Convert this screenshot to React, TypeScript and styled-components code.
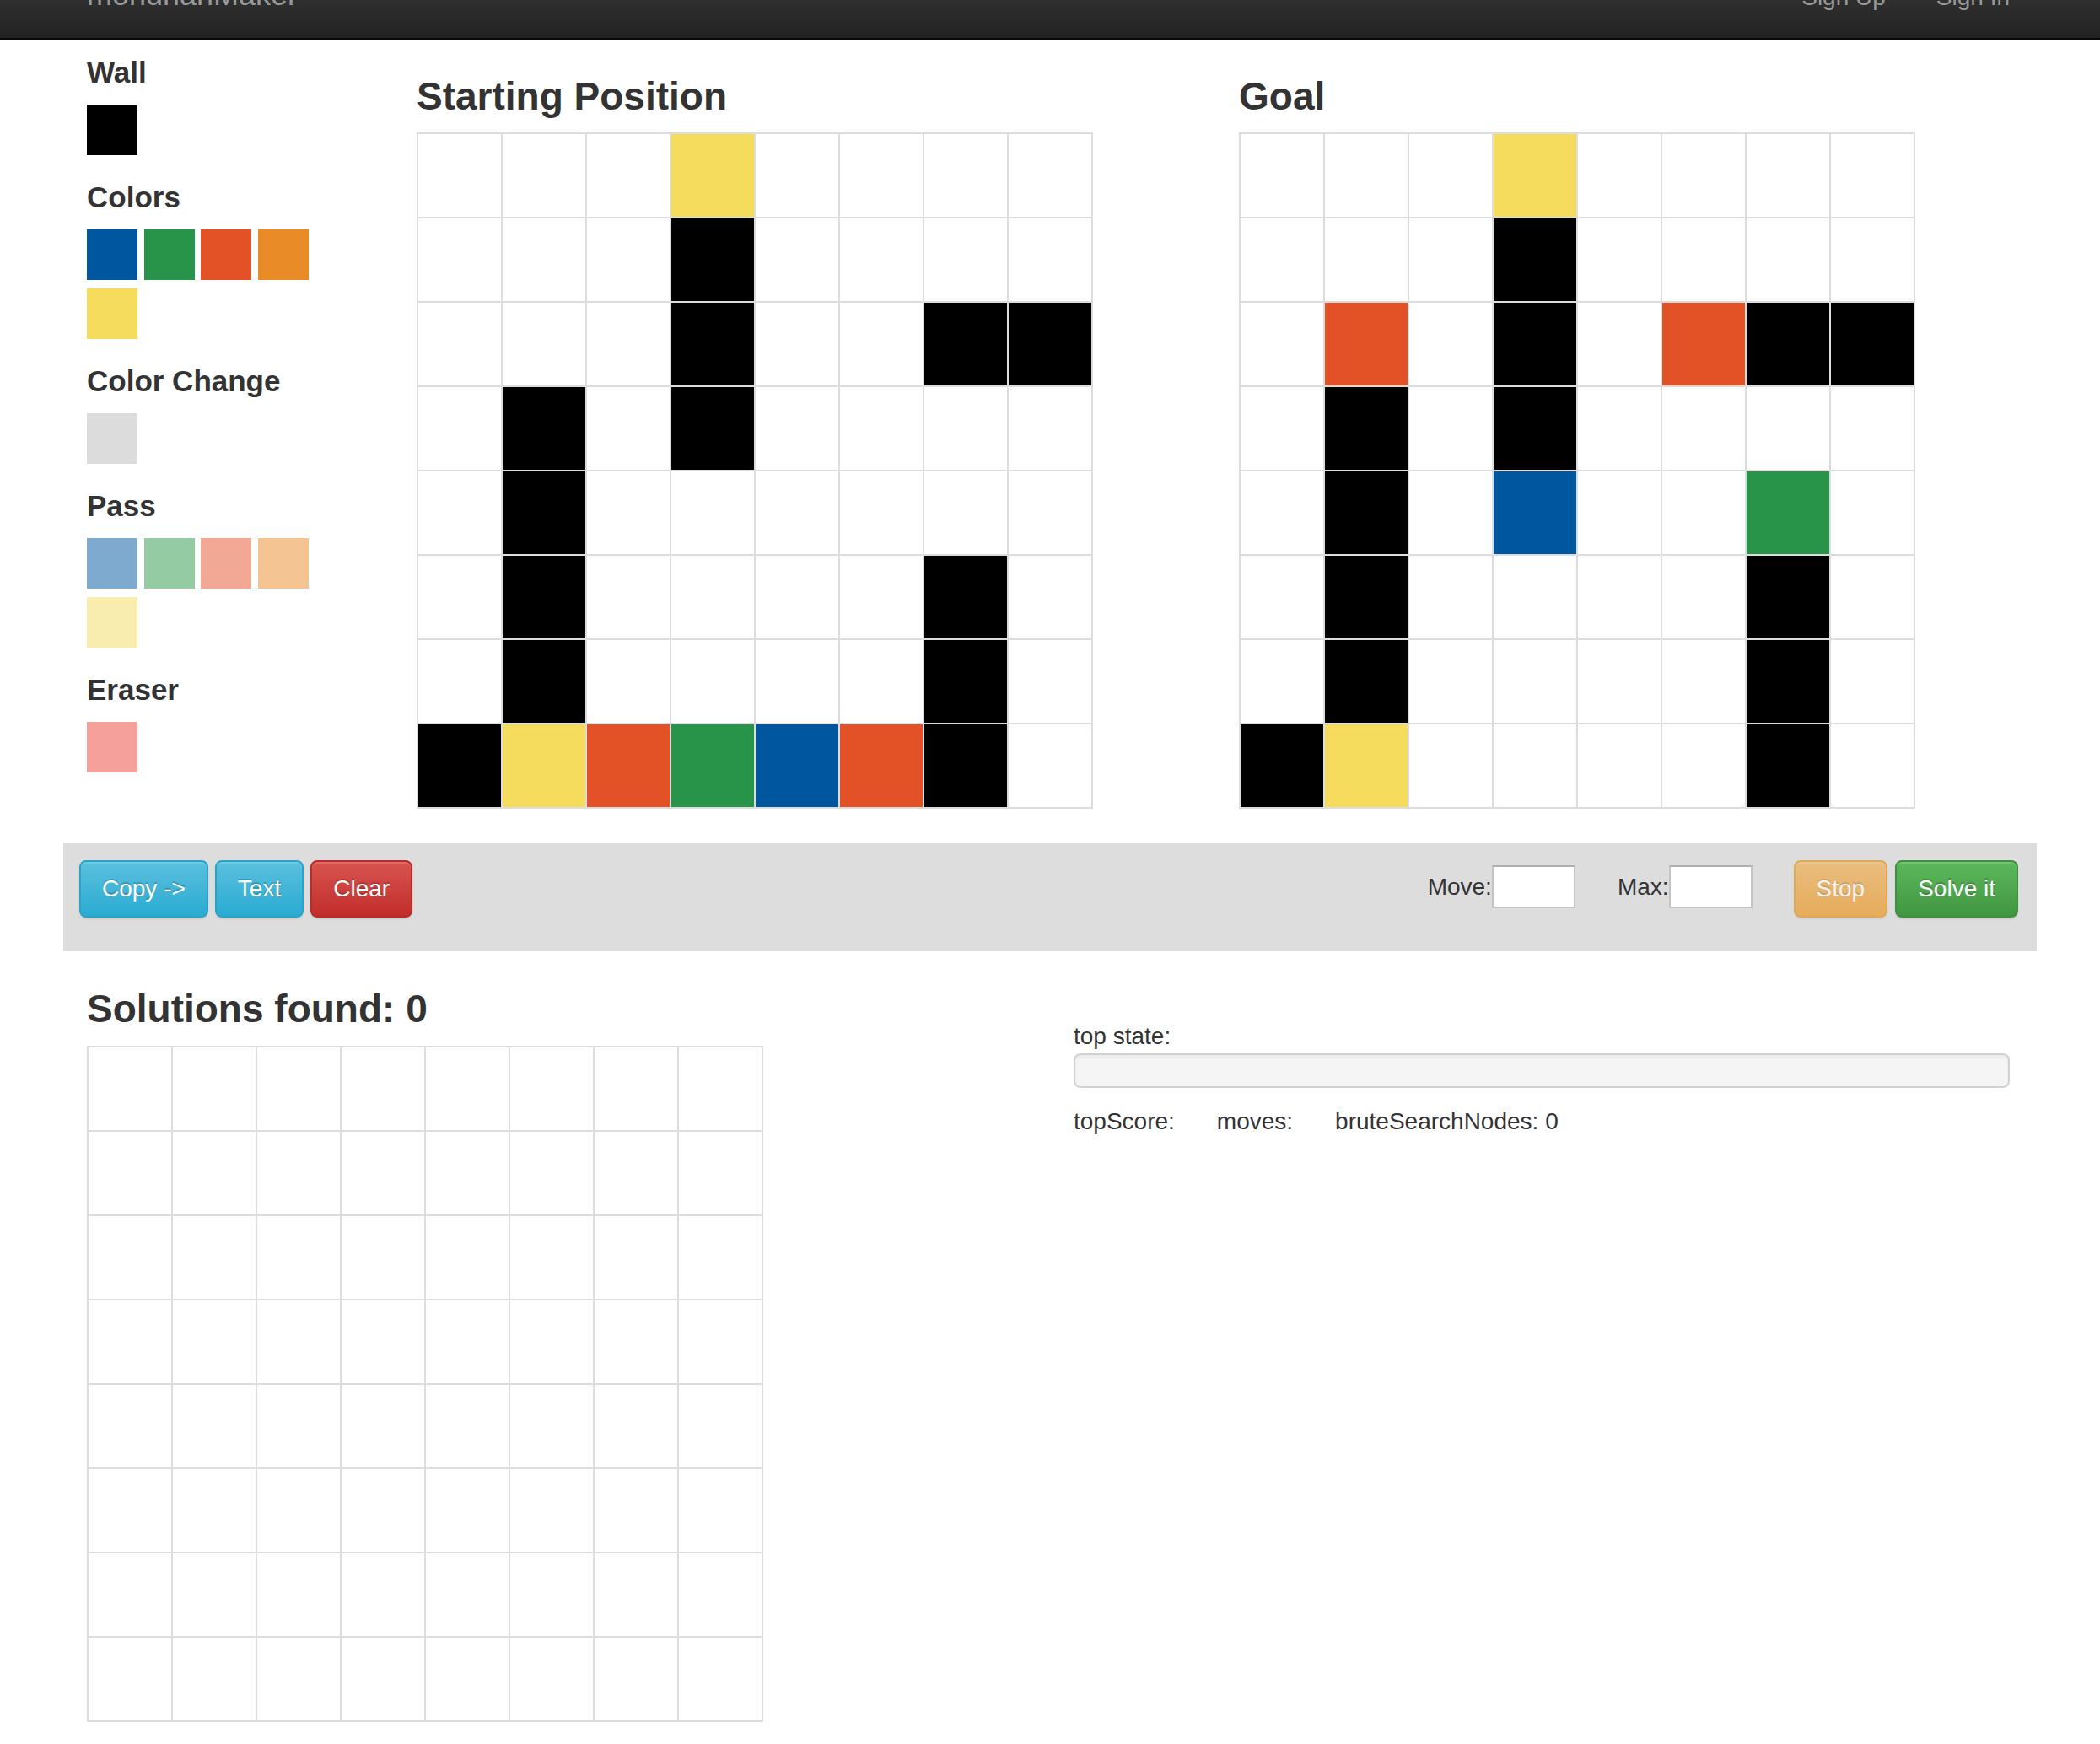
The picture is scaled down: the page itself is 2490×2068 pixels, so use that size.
import React from 'react';
import styled, { createGlobalStyle } from 'styled-components';

const GlobalStyle = createGlobalStyle`
  html, body {
    margin: 0;
    padding: 0;
    background: #fff;
  }
  body {
    font-family: "Liberation Sans", Arial, Helvetica, sans-serif;
    font-size: 28px;
    line-height: 40px;
    color: #333;
  }
  * {
    box-sizing: border-box;
  }
`;

const COLORS: Record<string, string> = {
  _: '#fff',
  K: '#000',
  Y: '#f6dc5c',
  R: '#e35226',
  G: '#28944a',
  B: '#00569f',
  O: '#e98b26',
};

const START = [
  '___Y____',
  '___K____',
  '___K__KK',
  '_K_K____',
  '_K______',
  '_K____K_',
  '_K____K_',
  'KYRGBRK_',
];

const GOAL = [
  '___Y____',
  '___K____',
  '_R_K_RKK',
  '_K_K____',
  '_K_B__G_',
  '_K____K_',
  '_K____K_',
  'KY____K_',
];

const EMPTY = Array.from({ length: 8 }, () => '________');

const PALETTE = [
  { title: 'Wall', swatches: ['#000'] },
  { title: 'Colors', swatches: ['#00569f', '#28944a', '#e35226', '#e98b26', '#f6dc5c'] },
  { title: 'Color Change', swatches: ['#dcdcdc'] },
  { title: 'Pass', swatches: ['#7eaad0', '#95cba3', '#f1a895', '#f4c493', '#f9ecaf'] },
  { title: 'Eraser', swatches: ['#f5a09b'] },
];

const Navbar = styled.div`
  height: 47px;
  overflow: hidden;
  background: linear-gradient(to bottom, #2f2f2f 0%, #222 100%);
  border-bottom: 2px solid #080808;
`;

const NavContainer = styled.div`
  width: 2340px;
  margin: -26px auto 0;
  padding: 0 32px 0 28px;
  display: flex;
  justify-content: space-between;
  align-items: baseline;
`;

const Brand = styled.span`
  font-size: 36px;
  line-height: 40px;
  color: #999;
`;

const NavLinks = styled.div`
  display: flex;
  gap: 60px;
  font-size: 28px;
  line-height: 40px;
  color: #999;
`;

const Container = styled.div`
  width: 2340px;
  margin: 0 auto;
`;

const TopRow = styled.div`
  display: grid;
  grid-template-columns: 390px 975px 975px;
  align-items: start;
`;

const PaletteColumn = styled.div`
  padding: 19px 0 0 28px;
`;

const PaletteLabel = styled.h4`
  margin: 0 0 18px;
  font-size: 35px;
  line-height: 40px;
  font-weight: bold;
  color: #333;
`;

const SwatchGroup = styled.div`
  display: flex;
  flex-wrap: wrap;
  gap: 10px 7.5px;
  width: 275px;
  margin-bottom: 30px;
`;

const Swatch = styled.div<{ $color: string }>`
  width: 60px;
  height: 60px;
  background: ${({ $color }) => $color};
  cursor: pointer;
`;

const BoardColumn = styled.div`
  padding-left: 29px;
`;

const Heading = styled.h3`
  margin: 40px 0 16px;
  font-size: 46px;
  line-height: 54px;
  font-weight: bold;
  color: #333;
`;

const BoardGrid = styled.div`
  display: grid;
  grid-template-columns: repeat(8, 98px);
  grid-auto-rows: 98px;
  gap: 2px;
  padding: 2px;
  background: #dddddd;
  width: fit-content;
`;

const Cell = styled.div<{ $color: string }>`
  background: ${({ $color }) => $color};
`;

/* toolbar */
const Toolbar = styled.div`
  margin-top: 41px;
  background: #dddddd;
  padding: 20px 22px 40px 19px;
  display: flex;
  justify-content: space-between;
  align-items: flex-start;
`;

const ButtonGroup = styled.div`
  display: flex;
  align-items: center;
`;

const variants = {
  info: { from: '#5bc0de', to: '#2aabd2', border: '#28a4c9' },
  danger: { from: '#d9534f', to: '#c12e2a', border: '#b92c28' },
  success: { from: '#5cb85c', to: '#419641', border: '#3e8f3e' },
  warning: { from: '#f0ad4e', to: '#eb9316', border: '#e38d13' },
};

type Variant = keyof typeof variants;

const Button = styled.button<{ $variant: Variant; $disabled?: boolean; $gap?: number }>`
  height: 68px;
  padding: 0 25px;
  margin-left: ${({ $gap }) => $gap ?? 0}px;
  font-family: "Liberation Sans", Arial, Helvetica, sans-serif;
  font-size: 28px;
  line-height: 40px;
  color: #fff;
  border-radius: 8px;
  border: 2px solid ${({ $variant }) => variants[$variant].border};
  background: ${({ $variant }) =>
    `linear-gradient(to bottom, ${variants[$variant].from} 0%, ${variants[$variant].to} 100%)`};
  text-shadow: 0 -2px 0 rgba(0, 0, 0, 0.2);
  box-shadow: inset 0 2px 0 rgba(255, 255, 255, 0.15), 0 2px 2px rgba(0, 0, 0, 0.075);
  opacity: ${({ $disabled }) => ($disabled ? 0.65 : 1)};
  cursor: pointer;
`;

const FieldGroup = styled.div`
  display: flex;
  align-items: center;
  margin-bottom: 5px;
`;

const FieldLabel = styled.label`
  font-size: 28px;
  line-height: 40px;
  color: #333;
`;

const SmallInput = styled.input<{ $gap?: number }>`
  width: 99px;
  height: 51px;
  margin-right: ${({ $gap }) => $gap ?? 50}px;
  border: 2px solid #c4c4c4;
  border-top-color: #b0b0b0;
  background: #fff;
  padding: 0 6px;
  font-size: 28px;
`;

/* bottom section */
const BottomRow = styled.div`
  display: grid;
  grid-template-columns: 1170px 1170px;
  align-items: start;
`;

const SolutionsColumn = styled.div`
  padding-left: 28px;
`;

const SolutionsHeading = styled(Heading)`
  margin: 41px 0 17px;
`;

const StatsColumn = styled.div`
  padding: 81px 32px 0 28px;
`;

const StateLabel = styled.div`
  font-size: 28px;
  line-height: 40px;
`;

const Progress = styled.div`
  height: 41px;
  margin: 0 0 20px;
  background: #f5f5f5;
  border: 2px solid #d2d2d2;
  border-radius: 8px;
  box-shadow: inset 0 2px 4px rgba(0, 0, 0, 0.06);
`;

const StatsLine = styled.div`
  display: flex;
  gap: 50px;
  font-size: 28px;
  line-height: 40px;
`;

const Board = ({ rows }: { rows: string[] }) => (
  <BoardGrid>
    {rows.flatMap((row, r) =>
      row.split('').map((c, i) => <Cell key={`${r}-${i}`} $color={COLORS[c]} />)
    )}
  </BoardGrid>
);

export default function App() {
  return (
    <>
      <GlobalStyle />
      <Navbar>
        <NavContainer>
          <Brand>mondrianMaker</Brand>
          <NavLinks>
            <span>Sign Up</span>
            <span>Sign In</span>
          </NavLinks>
        </NavContainer>
      </Navbar>
      <Container>
        <TopRow>
          <PaletteColumn>
            {PALETTE.map((group) => (
              <div key={group.title}>
                <PaletteLabel>{group.title}</PaletteLabel>
                <SwatchGroup>
                  {group.swatches.map((c) => (
                    <Swatch key={c} $color={c} />
                  ))}
                </SwatchGroup>
              </div>
            ))}
          </PaletteColumn>
          <BoardColumn>
            <Heading>Starting Position</Heading>
            <Board rows={START} />
          </BoardColumn>
          <BoardColumn>
            <Heading>Goal</Heading>
            <Board rows={GOAL} />
          </BoardColumn>
        </TopRow>

        <Toolbar>
          <ButtonGroup>
            <Button $variant="info">Copy -&gt;</Button>
            <Button $variant="info" $gap={8}>Text</Button>
            <Button $variant="danger" $gap={8}>Clear</Button>
          </ButtonGroup>
          <ButtonGroup>
            <FieldGroup>
              <FieldLabel>Move:</FieldLabel>
              <SmallInput />
              <FieldLabel>Max:</FieldLabel>
              <SmallInput $gap={49} />
            </FieldGroup>
            <Button $variant="warning" $disabled>Stop</Button>
            <Button $variant="success" $gap={9}>Solve it</Button>
          </ButtonGroup>
        </Toolbar>

        <BottomRow>
          <SolutionsColumn>
            <SolutionsHeading>Solutions found: 0</SolutionsHeading>
            <Board rows={EMPTY} />
          </SolutionsColumn>
          <StatsColumn>
            <StateLabel>top state:</StateLabel>
            <Progress />
            <StatsLine>
              <span>topScore:</span>
              <span>moves:</span>
              <span>bruteSearchNodes: 0</span>
            </StatsLine>
          </StatsColumn>
        </BottomRow>
      </Container>
    </>
  );
}
